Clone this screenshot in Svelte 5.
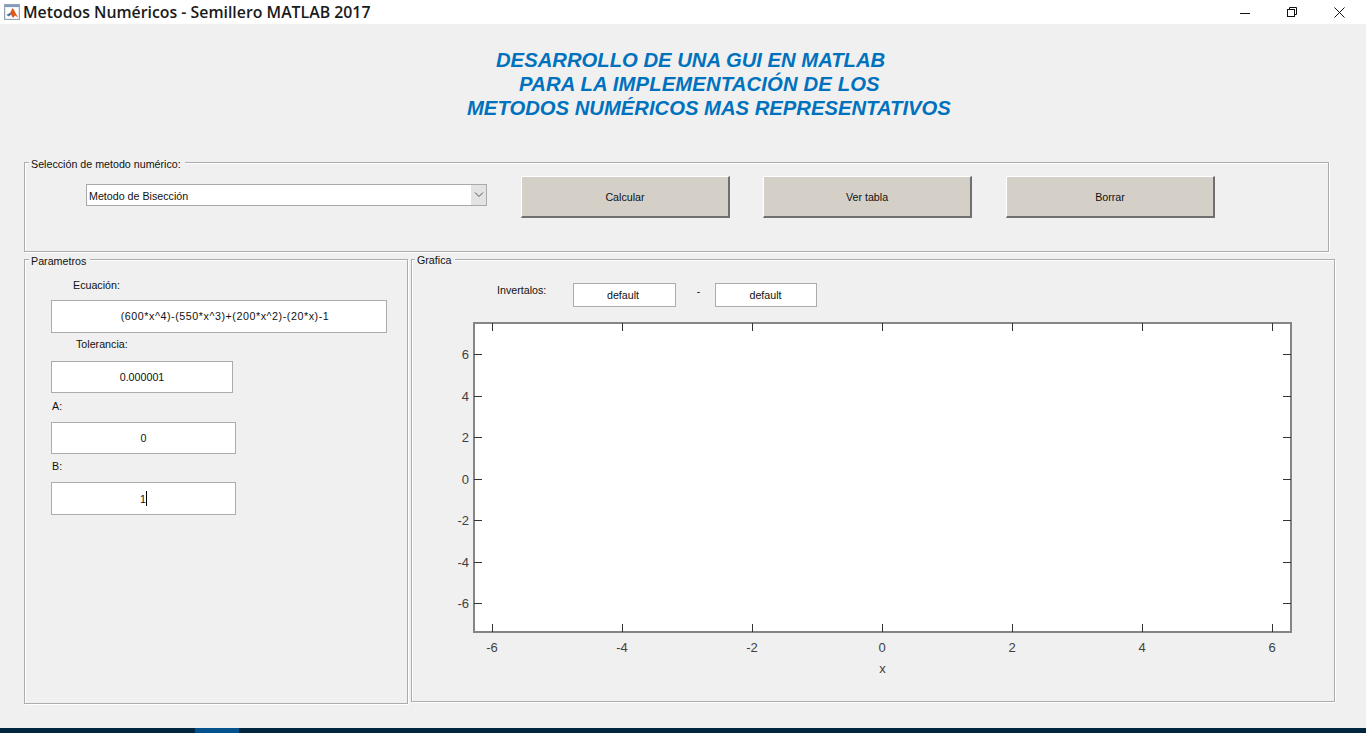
<script>
    const xTicks = [-6, -4, -2, 0, 2, 4, 6];
    const yTicks = [6, 4, 2, 0, -2, -4, -6];

    // axes geometry, in page pixels (the svg viewBox starts at 440,315)
    const left = 474;
    const right = 1291;
    const top = 323;
    const bottom = 632;
    const tickLen = 8;

    const xPos = (v) => Math.round(882 + v * 65) + 0.5;
    const yPos = (v) => Math.round(478.5 - v * 20.75) + 0.5;
</script>

<div class="window">
    <header class="titlebar">
        <svg class="app-icon" width="16" height="16" viewBox="0 0 16 16">
            <rect x="0.5" y="0.5" width="15" height="15" fill="#e6e9ee" stroke="#98a3b2" />
            <rect x="1" y="1" width="14" height="2" fill="#7f9cc4" />
            <rect x="2" y="3.5" width="12" height="11" fill="#fff" />
            <path d="M2.5 11 L6 9 L8.5 4 L10 6 L14 13.5 L11 11.5 L9 14 L7 10.5 Z" fill="#e0591a" />
            <path d="M2.5 11 L6 9 L7 10.5 L5 12.5 Z" fill="#3f78b5" />
        </svg>
        <h1>Metodos Numéricos - Semillero MATLAB 2017</h1>
        <div class="win-controls">
            <svg width="10" height="10" viewBox="0 0 10 10"><path d="M0 6.5H10" stroke="#111" /></svg>
            <svg width="10" height="10" viewBox="0 0 10 10" fill="none" stroke="#111">
                <rect x="0.5" y="2.5" width="7" height="7" />
                <path d="M2.5 2.5V0.5H9.5V7.5H7.5" />
            </svg>
            <svg width="11" height="11" viewBox="0 0 11 11"><path d="M0.5 0.5L10.5 10.5M10.5 0.5L0.5 10.5" stroke="#111" /></svg>
        </div>
    </header>

    <main class="content">
        <div class="heading">
            <div>DESARROLLO DE UNA GUI EN MATLAB</div>
            <div class="line-two">PARA LA IMPLEMENTACIÓN DE LOS</div>
            <div class="line-three">METODOS NUMÉRICOS MAS REPRESENTATIVOS</div>
        </div>

        <section class="panel select-panel">
            <span class="legend">Selección de metodo numérico:</span>
            <div class="combo">
                <span class="combo-text">Metodo de Bisección</span>
                <span class="combo-arrow">
                    <svg width="10" height="6" viewBox="0 0 10 6" fill="none" stroke="#555"><path d="M1 0.5L5 4.5L9 0.5" /></svg>
                </span>
            </div>
            <div class="actions">
                <button>Calcular</button>
                <button>Ver tabla</button>
                <button class="last-btn">Borrar</button>
            </div>
        </section>

        <div class="lower">
            <section class="panel params">
                <span class="legend">Parametros</span>
                <label class="ecuacion-label">Ecuación:</label>
                <div class="field wide">(600*x^4)-(550*x^3)+(200*x^2)-(20*x)-1</div>
                <label class="tol-label">Tolerancia:</label>
                <div class="field narrow">0.000001</div>
                <label>A:</label>
                <div class="field mid">0</div>
                <label>B:</label>
                <div class="field mid last">1<i class="caret"></i></div>
            </section>

            <section class="panel graph">
                <span class="legend">Grafica</span>
                <div class="intervals">
                    <span class="int-label">Invertalos:</span>
                    <div class="field small">default</div>
                    <span class="dash">-</span>
                    <div class="field small second">default</div>
                </div>
                <svg class="plot" width="880" height="370" viewBox="440 315 880 370">
                    <rect x={left} y={top} width={right - left} height={bottom - top} fill="#fff" stroke="#858585" stroke-width="2" />
                    {#each xTicks as t}
                        <path d="M{xPos(t)} {top}v{tickLen}M{xPos(t)} {bottom}v-{tickLen}" stroke="#333" />
                        <text x={xPos(t) - 0.5} y="652" text-anchor="middle">{t}</text>
                    {/each}
                    {#each yTicks as t}
                        <path d="M{left} {yPos(t)}h{tickLen}M{right} {yPos(t)}h-{tickLen}" stroke="#333" />
                        <text x="469" y={yPos(t) + 4} text-anchor="end">{t}</text>
                    {/each}
                    <text x="882.5" y="673" text-anchor="middle" class="x-label">x</text>
                </svg>
            </section>
        </div>
    </main>

    <footer class="taskbar"><span class="task-active"></span></footer>
</div>

<style>
    :global(body) {
        margin: 0;
        overflow: hidden;
    }

    .window {
        width: 1366px;
        height: 733px;
        display: flex;
        flex-direction: column;
        background: #f0f0f0;
        font-family: "Liberation Sans", Arial, sans-serif;
        font-size: 10.7px;
        color: #111;
    }

    .titlebar {
        height: 24px;
        flex: none;
        display: flex;
        align-items: center;
        background: #fff;
        padding-left: 4px;
    }

    .app-icon {
        margin-right: 3px;
    }

    .titlebar h1 {
        margin: 0;
        font-family: "Open Sans", "Noto Sans", sans-serif;
        font-size: 15.85px;
        font-weight: 600;
        color: #1a1a1a;
        white-space: nowrap;
    }

    .win-controls {
        margin-left: auto;
        display: flex;
        align-items: center;
        gap: 37px;
        padding-right: 21px;
    }

    .content {
        flex: 1;
        padding-left: 24px;
    }

    .heading {
        height: 138px;
        box-sizing: border-box;
        padding: 24px 0 0 472px;
        font-size: 20.25px;
        line-height: 24px;
        font-weight: bold;
        font-style: italic;
        color: #0072bd;
        white-space: nowrap;
    }

    .line-two {
        padding-left: 23px;
        letter-spacing: 0.14px;
    }

    .line-three {
        margin-left: -29px;
    }

    .panel {
        position: relative;
        box-sizing: border-box;
        border: 1px solid #acacac;
        box-shadow: inset 1px 1px 0 #fff, 1px 1px 0 #fff;
    }

    .legend {
        position: absolute;
        top: -5px;
        left: 4px;
        padding: 0 4px 0 2px;
        background: #f0f0f0;
        line-height: 12px;
        white-space: nowrap;
    }

    .select-panel {
        width: 1305px;
        height: 90px;
        display: flex;
        align-items: flex-start;
        padding-left: 61px;
    }

    .combo {
        width: 401px;
        height: 22px;
        margin-top: 21px;
        box-sizing: border-box;
        display: flex;
        align-items: center;
        justify-content: space-between;
        padding-left: 2px;
        background: #fff;
        border: 1px solid #a9a9a9;
    }

    .combo-text {
        padding-top: 1px;
    }

    .combo-arrow {
        width: 15px;
        height: 100%;
        display: flex;
        align-items: center;
        justify-content: center;
        background: #e3e3e3;
    }

    .actions {
        display: flex;
        gap: 33px;
        margin: 13px 0 0 34px;
    }

    .actions button {
        width: 209px;
        height: 42px;
        padding: 1px 0 0;
        box-sizing: border-box;
        background: #d4d0c8;
        border: none;
        border-top: 1px solid #fff;
        border-left: 1px solid #fff;
        border-right: 2px solid #6f6f6f;
        border-bottom: 2px solid #6f6f6f;
        font: inherit;
        color: #111;
    }

    .actions .last-btn {
        margin-left: 1px;
    }

    .lower {
        display: flex;
        align-items: flex-start;
        gap: 3px;
        margin-top: 7px;
    }

    .params {
        width: 384px;
        height: 445px;
        padding: 19px 0 0 26px;
    }

    .params label {
        display: block;
        height: 12px;
        line-height: 12px;
        margin: 6px 0 10px 1px;
    }

    .params .ecuacion-label {
        margin: 0 0 9px 22px;
    }

    .params .tol-label {
        margin: 5px 0 11px 25px;
    }

    .field {
        box-sizing: border-box;
        display: flex;
        align-items: center;
        justify-content: center;
        background: #fff;
        border: 1px solid #acacac;
    }

    .wide {
        width: 336px;
        height: 33px;
        padding: 0 0 1px 12px;
        letter-spacing: 0.55px;
    }

    .narrow {
        width: 182px;
        height: 32px;
        margin-bottom: 7px;
    }

    .mid {
        width: 185px;
        height: 32px;
    }

    .last {
        height: 33px;
    }

    .caret {
        width: 1px;
        height: 15px;
        background: #000;
    }

    .graph {
        width: 924px;
        height: 443px;
    }

    .graph .legend {
        top: -6px;
        left: 3px;
    }

    .intervals {
        display: flex;
        align-items: flex-start;
        height: 24px;
        margin: 23px 0 0 85px;
    }

    .int-label {
        width: 76px;
        line-height: 14px;
        flex: none;
    }

    .small {
        width: 103px;
        height: 24px;
        padding-right: 3px;
    }

    .second {
        width: 102px;
        padding-right: 1px;
    }

    .dash {
        width: 39px;
        padding: 1px 0 0 6px;
        box-sizing: border-box;
        text-align: center;
        line-height: 14px;
    }

    .plot {
        display: block;
        margin: 8px 0 0 28px;
    }

    .plot text {
        font-family: "Liberation Sans", Arial, sans-serif;
        font-size: 13px;
        fill: #404040;
    }

    .taskbar {
        height: 5px;
        flex: none;
        background: #00263f;
        padding-left: 195px;
    }

    .task-active {
        display: block;
        width: 44px;
        height: 100%;
        background: #00528f;
    }
</style>
